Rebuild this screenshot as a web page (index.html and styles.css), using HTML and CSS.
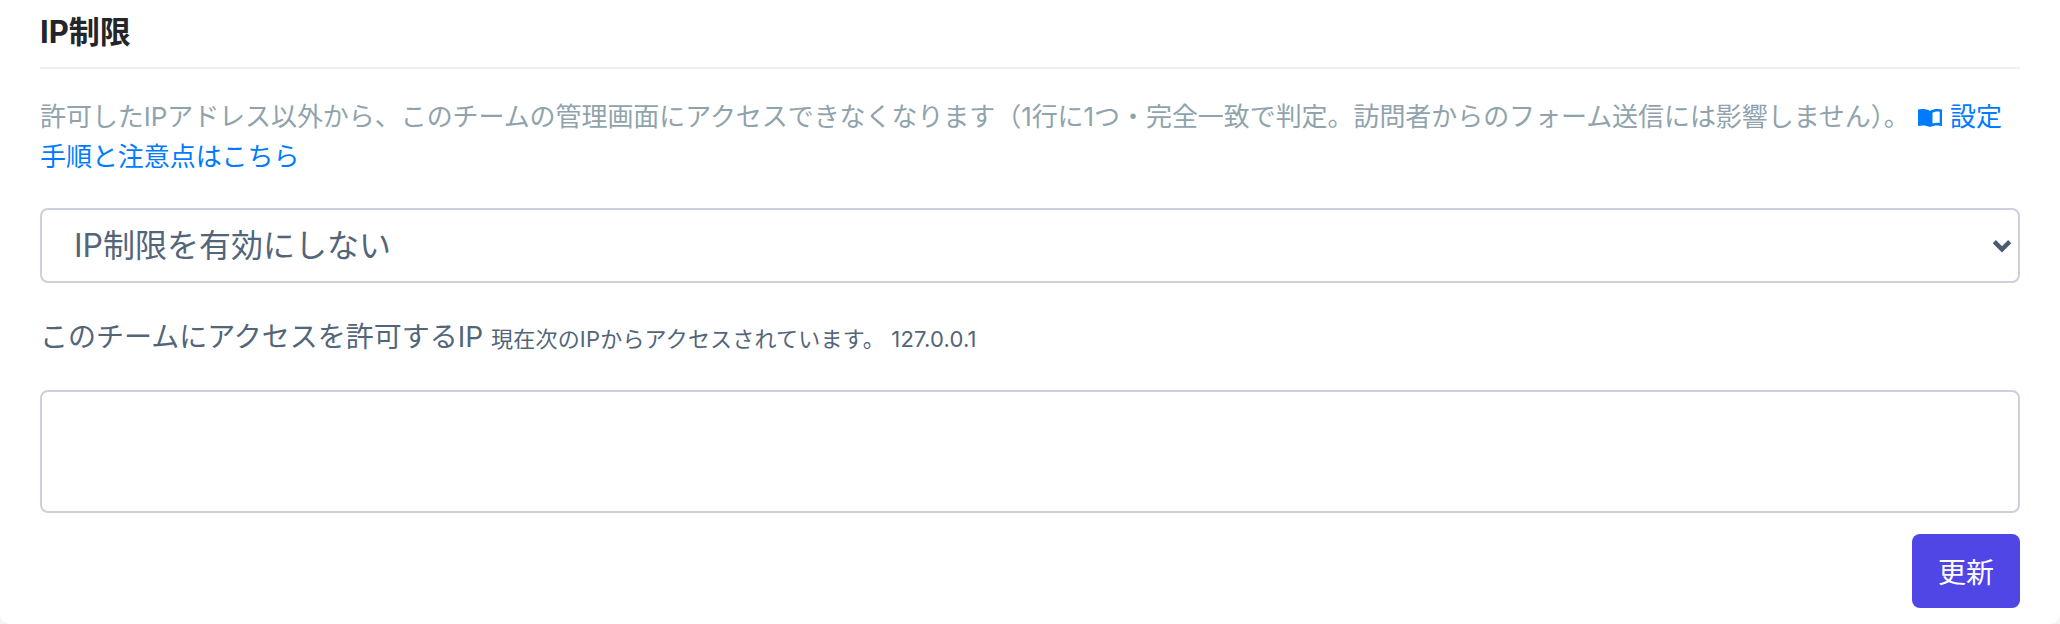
FILE: index.html
```html
<!DOCTYPE html>
<html lang="ja">
<head>
<meta charset="utf-8">
<title>IP制限</title>
<link rel="stylesheet" href="styles.css">
</head>
<body>
<main class="card">
  <h2 class="title">IP制限</h2>
  <p class="help">許可したIPアドレス以外から、このチームの管理画面にアクセスできなくなります（1行に1つ・完全一致で判定。訪問者からのフォーム送信には影響しません）。 <a class="link" href="#"><svg class="book" viewBox="0 0 26 20" aria-hidden="true"><path fill="currentColor" fill-rule="evenodd" d="M13 3C11 1.6 8 1 5 1 3.5 1 2 1.2 1 1.5V18c1.5-.4 3-.6 5-.6 2.500 0 5 .6 7 1.600 2-1 4.500-1.600 7-1.600 2 0 3.500.2 5 .6V1.500C24 1.200 22.500 1 21 1c-3 0-6 .6-8 2zm2.500 1.800c1.500-.8 3.500-1.200 5.500-1.200.6 0 1.200 0 1.700.1v11.200c-.9-.1-1.800-.2-2.700-.2-1.600 0-3.100.2-4.500.7V4.800z"/></svg> 設定手順と注意点はこちら</a></p>
  <div class="select-box">
    <span>IP制限を有効にしない</span>
    <svg class="chev" viewBox="0 0 20 20" aria-hidden="true"><path fill="none" stroke="currentColor" stroke-width="4" d="M3 6 10 13l7-7"/></svg>
  </div>
  <div class="label">このチームにアクセスを許可するIP <small>現在次のIPからアクセスされています。 127.0.0.1</small></div>
  <div class="textarea"></div>
  <div class="actions"><button class="btn" type="button">更新</button></div>
</main>
</body>
</html>
```
FILE: styles.css
```css
* { box-sizing: border-box; }
html, body { margin: 0; height: 100%; }
body {
  background: #f3f4f6;
  font-family: Inter, "Noto Sans CJK JP", sans-serif;
  overflow: hidden;
}
.card {
  height: 624px;
  background: #fff;
  border-radius: 0 0 10px 10px;
  padding: 0 40px 16px;
}
.title {
  margin: 0;
  height: 69px;
  padding-top: 11px;
  font-size: 31px;
  line-height: 42px;
  font-weight: 700;
  color: #22252a;
  border-bottom: 2px solid #edf0f3;
}
.help {
  margin: 0;
  padding-top: 28px;
  font-size: 26px;
  line-height: 40px;
  letter-spacing: -0.06px;
  color: #8fa3ad;
}
.link { color: #007bff; text-decoration: none; }
.book { width: 26px; height: 20px; vertical-align: -2px; }
.select-box {
  margin-top: 31px;
  height: 75px;
  border: 2px solid #cbd0da;
  border-radius: 8px;
  padding: 0 5px 0 32px;
  display: flex;
  align-items: center;
  justify-content: space-between;
  font-size: 32px;
  line-height: 40px;
  color: #526579;
}
.chev { width: 22px; height: 22px; margin-top: 1px; color: #4a5a70; }
.label {
  margin-top: 32px;
  font-size: 28px;
  line-height: 44px;
  color: #526579;
}
.label small { font-size: 22px; letter-spacing: 0.2px; }
.textarea {
  margin-top: 29px;
  height: 123px;
  border: 2px solid #cbd0da;
  border-radius: 8px;
}
.actions { display: flex; justify-content: flex-end; margin-top: 21px; }
.btn {
  width: 108px;
  height: 74px;
  border: 0;
  border-radius: 8px;
  background: #4f46e5;
  color: #fff;
  font: inherit;
  font-size: 28px;
}
```
